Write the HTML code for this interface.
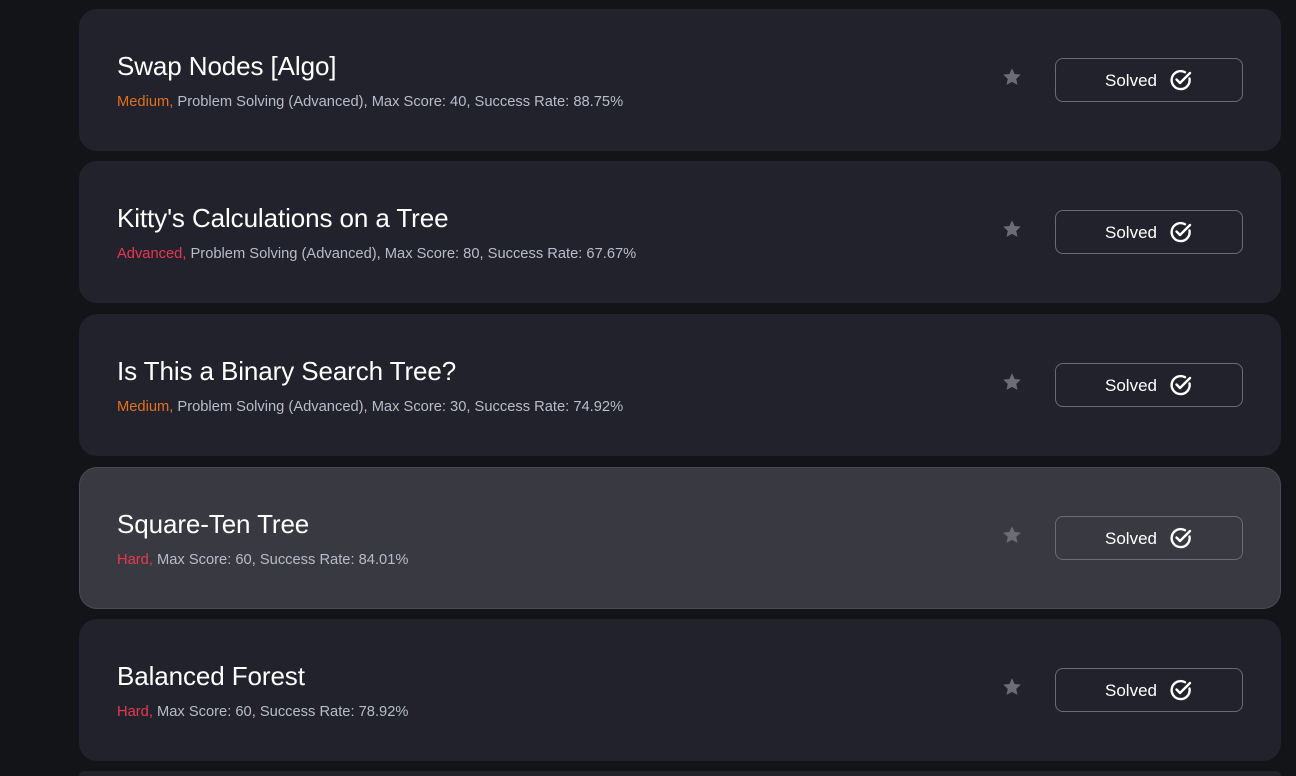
<!DOCTYPE html>
<html><head><meta charset="utf-8"><style>
html,body{margin:0;width:1296px;height:776px;overflow:hidden}
body{background:#131418;font-family:"Liberation Sans",sans-serif;position:relative}
.card{position:absolute;left:79px;width:1202px;height:142px;background:#22222c;border-radius:18px;box-sizing:border-box}
.card.h{background:#393941;border:1px solid #4a4a52}
.t{position:absolute;left:38px;top:42px;font-size:26px;color:#fff;letter-spacing:-0.1px}
.s{position:absolute;left:38px;top:85px;font-size:14.7px;color:#b8bcca}
.m{color:#e0701f}.r{color:#e8384f}
.star{position:absolute;left:922px;top:57px}
.btn{position:absolute;left:976px;top:49px;width:188px;height:44px;border:1px solid #6b6b74;border-radius:8px;box-sizing:border-box;color:#fff;font-size:17px}
.btn span{position:absolute;left:49px;top:12px}
.btn svg{position:absolute;left:112px;top:8px}
</style></head><body>
<div class="card" style="top:9px"><div class="t">Swap Nodes [Algo]</div><div class="s"><span class="m">Medium,</span> Problem Solving (Advanced), Max Score: 40, Success Rate: 88.75%</div>
<svg class="star" width="22" height="22" viewBox="0 0 24 24"><path d="M12 2.5l2.9 6.2 6.7.7-5 4.6 1.4 6.6L12 17.3l-6 3.3 1.4-6.6-5-4.6 6.7-.7z" fill="#6b6c76"/></svg>
<div class="btn"><span>Solved</span><svg width="26" height="26" viewBox="0 0 26 26"><path d="M21.5 11.5A9 9 0 1 1 17 5.2" fill="none" stroke="#fff" stroke-width="2.4" stroke-linecap="round"/><path d="M8.5 12.5l3.5 3.5 10-10" fill="none" stroke="#fff" stroke-width="2.4" stroke-linecap="round" stroke-linejoin="round"/></svg></div></div>
<div class="card" style="top:161px"><div class="t">Kitty's Calculations on a Tree</div><div class="s"><span class="r">Advanced,</span> Problem Solving (Advanced), Max Score: 80, Success Rate: 67.67%</div>
<svg class="star" width="22" height="22" viewBox="0 0 24 24"><path d="M12 2.5l2.9 6.2 6.7.7-5 4.6 1.4 6.6L12 17.3l-6 3.3 1.4-6.6-5-4.6 6.7-.7z" fill="#6b6c76"/></svg>
<div class="btn"><span>Solved</span><svg width="26" height="26" viewBox="0 0 26 26"><path d="M21.5 11.5A9 9 0 1 1 17 5.2" fill="none" stroke="#fff" stroke-width="2.4" stroke-linecap="round"/><path d="M8.5 12.5l3.5 3.5 10-10" fill="none" stroke="#fff" stroke-width="2.4" stroke-linecap="round" stroke-linejoin="round"/></svg></div></div>
<div class="card" style="top:314px"><div class="t">Is This a Binary Search Tree?</div><div class="s"><span class="m">Medium,</span> Problem Solving (Advanced), Max Score: 30, Success Rate: 74.92%</div>
<svg class="star" width="22" height="22" viewBox="0 0 24 24"><path d="M12 2.5l2.9 6.2 6.7.7-5 4.6 1.4 6.6L12 17.3l-6 3.3 1.4-6.6-5-4.6 6.7-.7z" fill="#6b6c76"/></svg>
<div class="btn"><span>Solved</span><svg width="26" height="26" viewBox="0 0 26 26"><path d="M21.5 11.5A9 9 0 1 1 17 5.2" fill="none" stroke="#fff" stroke-width="2.4" stroke-linecap="round"/><path d="M8.5 12.5l3.5 3.5 10-10" fill="none" stroke="#fff" stroke-width="2.4" stroke-linecap="round" stroke-linejoin="round"/></svg></div></div>
<div class="card h" style="top:467px"><div class="t" style="left:37px;top:41px">Square-Ten Tree</div><div class="s" style="left:37px;top:84px"><span class="r">Hard,</span> Max Score: 60, Success Rate: 84.01%</div>
<svg class="star" style="left:921px;top:56px" width="22" height="22" viewBox="0 0 24 24"><path d="M12 2.5l2.9 6.2 6.7.7-5 4.6 1.4 6.6L12 17.3l-6 3.3 1.4-6.6-5-4.6 6.7-.7z" fill="#6b6c76"/></svg>
<div class="btn" style="left:975px;top:48px"><span>Solved</span><svg width="26" height="26" viewBox="0 0 26 26"><path d="M21.5 11.5A9 9 0 1 1 17 5.2" fill="none" stroke="#fff" stroke-width="2.4" stroke-linecap="round"/><path d="M8.5 12.5l3.5 3.5 10-10" fill="none" stroke="#fff" stroke-width="2.4" stroke-linecap="round" stroke-linejoin="round"/></svg></div></div>
<div class="card" style="top:619px"><div class="t">Balanced Forest</div><div class="s"><span class="r">Hard,</span> Max Score: 60, Success Rate: 78.92%</div>
<svg class="star" width="22" height="22" viewBox="0 0 24 24"><path d="M12 2.5l2.9 6.2 6.7.7-5 4.6 1.4 6.6L12 17.3l-6 3.3 1.4-6.6-5-4.6 6.7-.7z" fill="#6b6c76"/></svg>
<div class="btn"><span>Solved</span><svg width="26" height="26" viewBox="0 0 26 26"><path d="M21.5 11.5A9 9 0 1 1 17 5.2" fill="none" stroke="#fff" stroke-width="2.4" stroke-linecap="round"/><path d="M8.5 12.5l3.5 3.5 10-10" fill="none" stroke="#fff" stroke-width="2.4" stroke-linecap="round" stroke-linejoin="round"/></svg></div></div>
<div class="card" style="top:771px;height:5px;border-radius:18px 18px 0 0"></div>
</body></html>
